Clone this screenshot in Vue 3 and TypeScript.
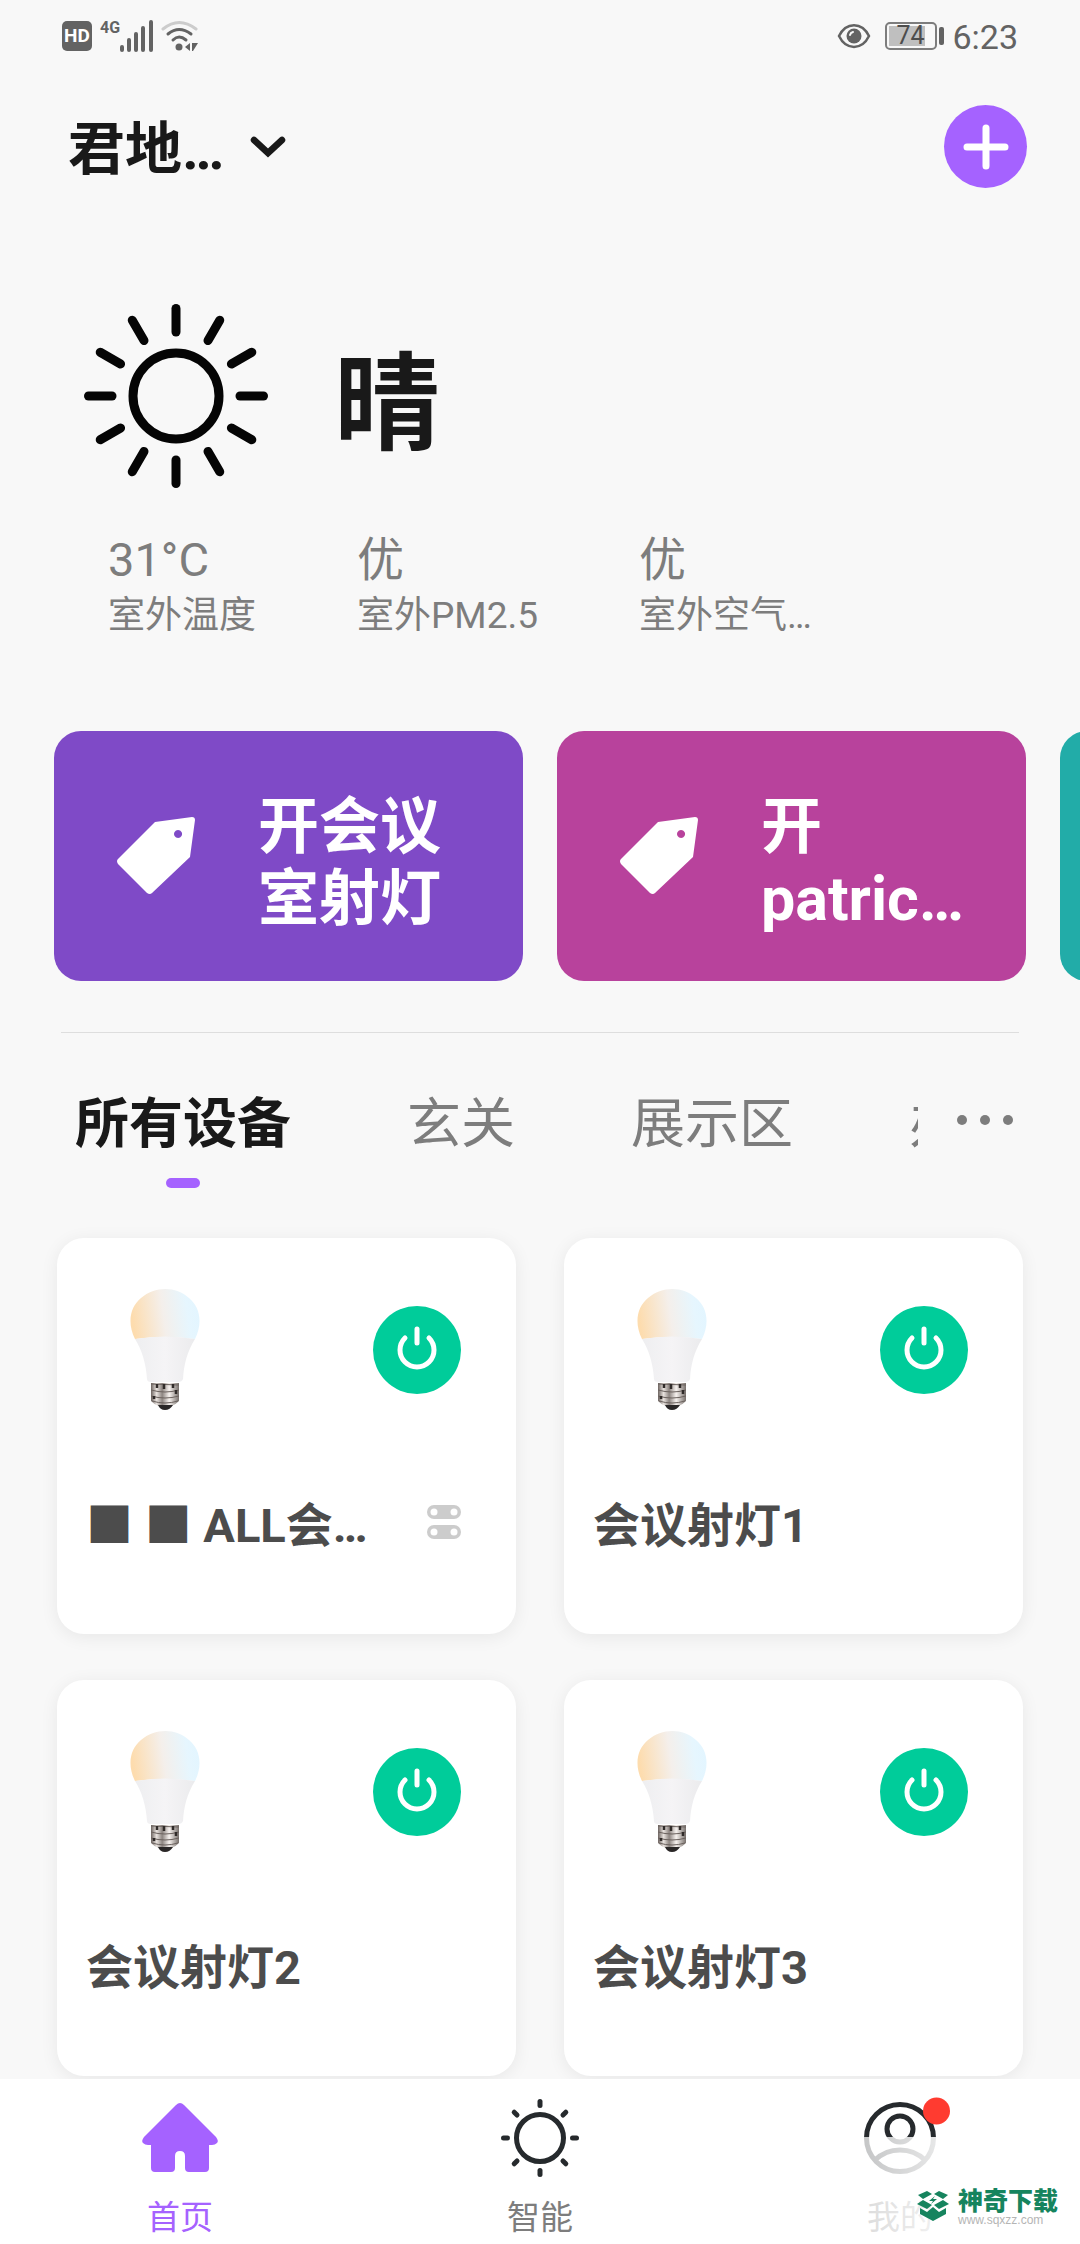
<script setup lang="ts">
import { ref } from 'vue'

interface Stat { value: string; label: string }
interface Scene { name: string; tone: string }
interface Device { name: string; group: boolean }

const stats: Stat[] = [
  { value: '31°C', label: '室外温度' },
  { value: '优', label: '室外PM2.5' },
  { value: '优', label: '室外空气…' },
]

const scenes: Scene[] = [
  { name: '开会议室射灯', tone: 'violet' },
  { name: '开 patric…', tone: 'magenta' },
  { name: '', tone: 'teal' },
]

const rooms: string[] = ['所有设备', '玄关', '展示区', '办公室']
const activeRoom = ref(0)

const devices: Device[] = [
  { name: '■ ■ ALL会…', group: true },
  { name: '会议射灯1', group: false },
  { name: '会议射灯2', group: false },
  { name: '会议射灯3', group: false },
]

const rays = Array.from({ length: 12 }, (_, i) => i * 30)
const smallRays = Array.from({ length: 8 }, (_, i) => i * 45)
</script>

<template>
  <div class="page">
    <div class="status">
      <div class="status-side">
        <span class="hd">HD</span>
        <span class="net">4G</span>
        <svg class="signal" width="34" height="32" viewBox="0 0 34 32" aria-hidden="true">
          <path d="M2 27v3M9 20v10M16 14v16M23 8v22M31 2v28" fill="none" stroke="#636363" stroke-width="4" stroke-linecap="round" />
        </svg>
        <svg width="38" height="32" viewBox="0 0 38 32" fill="none" aria-hidden="true">
          <path d="M2 9Q18 -4 35 9" stroke="#cccccc" stroke-width="3" stroke-linecap="round" />
          <path d="M7 14Q18 5 30 14" stroke="#636363" stroke-width="3" stroke-linecap="round" />
          <path d="M12 20Q18 14 25 20" stroke="#636363" stroke-width="3" stroke-linecap="round" />
          <circle cx="18" cy="27" r="3.5" fill="#636363" />
          <path d="M24 27l5-4v8zM31 23h6l-5 8h-1z" fill="#636363" />
        </svg>
      </div>
      <div class="status-side">
        <svg class="eye" width="34" height="26" viewBox="0 0 34 26" aria-hidden="true">
          <path d="M2 13C9-1.500 25-1.500 32 13C25 27.500 9 27.500 2 13z" fill="none" stroke="#636363" stroke-width="2.500" />
          <circle cx="17" cy="13" r="7.500" fill="#636363" />
          <path d="M13 12a4 4 0 0 1 3-3" fill="none" stroke="#f8f8f8" stroke-width="2" stroke-linecap="round" />
        </svg>
        <span class="battery"><span class="level">74</span></span>
        <span class="cap"></span>
        <span class="time">6:23</span>
      </div>
    </div>

    <header class="header">
      <button class="home" type="button">
        <span>君地…</span>
        <svg width="36" height="22" viewBox="0 0 36 22" aria-hidden="true">
          <path d="M4 4L18 17L32 4" fill="none" stroke="#191919" stroke-width="6.500" stroke-linecap="round" />
        </svg>
      </button>
      <button class="add" type="button" aria-label="添加">
        <svg width="46" height="46" viewBox="0 0 46 46" aria-hidden="true">
          <path d="M23 4v38M4 23h38" stroke="#ffffff" stroke-width="7" stroke-linecap="round" />
        </svg>
      </button>
    </header>

    <main>
      <section class="weather">
        <div class="sky">
          <svg width="184" height="184" viewBox="-92 -92 184 184" fill="none" stroke="#050505" stroke-width="9" aria-hidden="true">
            <circle r="43" />
            <path v-for="a in rays" :key="a" d="M0 -64V-87.500" stroke-linecap="round" :transform="`rotate(${a})`" />
          </svg>
          <h1>晴</h1>
        </div>
        <dl class="stats">
          <div v-for="(s, i) in stats" :key="i" class="stat">
            <dd>{{ s.value }}</dd>
            <dt>{{ s.label }}</dt>
          </div>
        </dl>
      </section>

      <section class="scenes">
        <button v-for="s in scenes" :key="s.tone" type="button" class="scene" :class="s.tone" :aria-label="s.name || '场景'">
          <svg v-if="s.name" width="78" height="78" viewBox="0 0 78 78" aria-hidden="true">
            <path fill-rule="evenodd" d="M38 5L75 0Q78 0 78 3L73 40L35 76Q33 78 30 76L1 47Q-1 44 1 42zM61 13a4 4 0 1 0 .1 0z" fill="#ffffff" />
          </svg>
          <span v-if="s.name" class="scene-name">{{ s.name }}</span>
        </button>
      </section>

      <div class="rooms">
        <nav class="tabs">
          <button
            v-for="(r, i) in rooms"
            :key="r"
            type="button"
            class="tab"
            :class="{ active: i === activeRoom }"
            @click="activeRoom = i"
          >{{ r }}</button>
        </nav>
        <button class="more" type="button" aria-label="更多"><i></i><i></i><i></i></button>
      </div>

      <section class="devices">
        <article v-for="d in devices" :key="d.name" class="device">
          <div class="device-top">
            <svg width="70" height="122" viewBox="0 0 70 122" aria-hidden="true">
              <defs>
                <linearGradient id="glass" x1="0" x2="1" y1="0.300" y2="0.200">
                  <stop offset="0" stop-color="#fddcae" />
                  <stop offset="0.450" stop-color="#f4efeb" />
                  <stop offset="0.800" stop-color="#e6f6fe" />
                  <stop offset="1" stop-color="#e2f5ff" />
                </linearGradient>
                <linearGradient id="shell" x1="0" x2="1" y1="0" y2="0">
                  <stop offset="0" stop-color="#eeeef0" />
                  <stop offset="0.500" stop-color="#f5f4f6" />
                  <stop offset="1" stop-color="#ebebed" />
                </linearGradient>
                <linearGradient id="metal" x1="0" x2="1" y1="0" y2="0">
                  <stop offset="0" stop-color="#6d6460" />
                  <stop offset="0.200" stop-color="#e9e3df" />
                  <stop offset="0.400" stop-color="#8d8581" />
                  <stop offset="0.650" stop-color="#f7f2ef" />
                  <stop offset="1" stop-color="#77706c" />
                </linearGradient>
              </defs>
              <path d="M5 50C-3 34 0 18 11 9C25-3 46-3 59 9C70 18 73 34 65 50Q35 46 5 50z" fill="url(#glass)" />
              <path d="M5 50Q35 45 65 50C57 63 54 75 53 90Q52 93 48 93H21Q17 93 17 90C16 75 12 61 5 50z" fill="url(#shell)" />
              <path d="M21 94H49V112Q43 118 35 118T21 112z" fill="url(#metal)" />
              <path d="M21 95L49 96M21 101Q35 105 49 101M21 107Q35 111 49 107M22 112Q35 116 48 112" fill="none" stroke="#6b625e" stroke-width="1" />
              <path d="M27 95v4M34 95v5M43 95v4M46 101v4M24 107v3" stroke="#302b29" stroke-width="2.500" />
              <path d="M28 116H43Q40 121 35 121T28 116z" fill="#2a2727" />
            </svg>
            <button class="power" type="button" aria-label="开关">
              <svg width="44" height="48" viewBox="0 0 44 48" fill="none" stroke="#ffffff" stroke-width="5" stroke-linecap="round" aria-hidden="true">
                <path d="M22 3V17" />
                <path d="M10 12A17 17 0 1 0 34 12" />
              </svg>
            </button>
          </div>
          <div class="device-info">
            <h2>{{ d.name }}</h2>
            <svg v-if="d.group" width="34" height="34" viewBox="0 0 34 34" aria-hidden="true">
              <rect width="34" height="14" rx="7" fill="#cccccc" />
              <rect y="20" width="34" height="14" rx="7" fill="#cccccc" />
              <g fill="#ffffff">
                <circle cx="7" cy="7" r="3.500" /><circle cx="27" cy="7" r="3.500" />
                <circle cx="7" cy="27" r="3.500" /><circle cx="27" cy="27" r="3.500" />
              </g>
            </svg>
          </div>
        </article>
      </section>
    </main>

    <nav class="bottom">
      <a href="#home" class="item current">
        <svg width="80" height="80" viewBox="0 0 80 80" aria-hidden="true">
          <path d="M36 7Q40 3 44 7L76 39Q79 43 77 45Q75 47 72 47H69V70Q69 74 65 74H49Q45 74 45 70V58Q45 53 40 53T35 58V70Q35 74 31 74H15Q11 74 11 70V47H8Q5 47 3 45Q1 43 4 39z" fill="#a562ff" />
        </svg>
        <span>首页</span>
      </a>
      <a href="#smart" class="item">
        <svg width="80" height="80" viewBox="-40 -40 80 80" fill="none" stroke="#262a2d" aria-hidden="true">
          <circle r="23.500" stroke-width="5" />
          <path v-for="a in smallRays" :key="a" d="M0 -32.500V-36.500" stroke-width="5" stroke-linecap="round" :transform="`rotate(${a})`" />
        </svg>
        <span>智能</span>
      </a>
      <a href="#mine" class="item">
        <svg width="80" height="80" viewBox="-40 -40 80 80" fill="none" stroke="#262a2d" stroke-width="5" aria-hidden="true">
          <circle r="33.500" />
          <circle cy="-9" r="13" />
          <path d="M-25 22A36 36 0 0 1 25 22" />
          <circle cx="36.500" cy="-27" r="13.500" fill="#ff3b30" stroke="none" />
        </svg>
        <span>我的</span>
      </a>
      <div class="mark">
        <svg width="32" height="32" viewBox="0 0 32 32" fill="#16845e" aria-hidden="true">
          <path d="M1 5L10 1L15 4L6 9zM22 1L31 5L26 9L17 4z" />
          <path d="M6 10L15 15L10 19L0 14zM26 10L32 14L22 19L17 15z" />
          <path d="M3 18L10 22L16 17L22 22L29 18V24L16 31L3 24z" />
          <path d="M18 6L12 11H16L14 14L20 9H16z" />
        </svg>
        <div class="mark-text">
          <strong>神奇下载</strong>
          <small>www.sqxzz.com</small>
        </div>
      </div>
    </nav>
  </div>
</template>

<style>
body {
  margin: 0;
  background: #f8f8f8;
}
</style>

<style scoped>
.page {
  display: flex;
  flex-direction: column;
  min-height: 100vh;
  overflow: hidden;
  background: #f8f8f8;
  color: #191919;
  font-family: Roboto, "Noto Sans CJK SC", sans-serif;
}
svg {
  display: block;
  flex: none;
}
button {
  margin: 0;
  padding: 0;
  border: 0;
  background: none;
  color: inherit;
  font: inherit;
  text-align: left;
}
main {
  flex: 1;
}

.status {
  display: flex;
  justify-content: space-between;
  height: 72px;
  padding: 0 62px;
  color: #636363;
}
.status-side {
  display: flex;
  align-items: center;
}
.hd {
  width: 30px;
  border-radius: 5px;
  background: #636363;
  color: #ffffff;
  font-size: 19px;
  font-weight: 700;
  line-height: 30px;
  text-align: center;
}
.net {
  align-self: flex-start;
  margin: 18px 0 0 8px;
  font-size: 16px;
  font-weight: 700;
  line-height: 20px;
}
.signal {
  margin-right: 7px;
}
.eye {
  margin-right: 14px;
}
.battery {
  box-sizing: border-box;
  width: 52px;
  height: 28px;
  padding: 2px;
  border: 2px solid #7d7d7d;
  border-radius: 5px;
}
.level {
  display: block;
  width: 36px;
  padding-left: 7px;
  box-sizing: border-box;
  background: #bfbfbf;
  color: #4d4d4d;
  font-size: 25px;
  line-height: 20px;
  height: 20px;
}
.cap {
  width: 5px;
  height: 18px;
  margin: 0 8px 0 2px;
  border-radius: 2px;
  background: #636363;
}
.time {
  font-size: 34px;
  line-height: 40px;
  padding-top: 2px;
}

.header {
  display: flex;
  align-items: center;
  justify-content: space-between;
  height: 149px;
  padding: 0 53px 0 68px;
}
.home {
  display: flex;
  align-items: center;
  gap: 26px;
  font-size: 57px;
  font-weight: 700;
  line-height: 72px;
}
.home span {
  padding-top: 6px;
}
.add {
  display: grid;
  place-items: center;
  width: 83px;
  height: 83px;
  border-radius: 50%;
  background: #a562ff;
}

.weather {
  padding: 83px 54px 88px 84px;
}
.sky {
  display: flex;
  align-items: center;
  gap: 66px;
}
.sky h1 {
  margin: 0;
  padding-top: 18px;
  font-size: 106px;
  font-weight: 700;
  line-height: 120px;
}
.stats {
  display: flex;
  gap: 101px;
  margin: 44px 0 0 24px;
  color: #7d7d7d;
}
.stat {
  display: flex;
  flex-direction: column;
}
.stat dd {
  margin: 0;
  font-size: 47px;
  line-height: 56px;
}
.stat dt {
  font-size: 37px;
  line-height: 55px;
}

.scenes {
  display: grid;
  grid-auto-flow: column;
  grid-auto-columns: calc(50% - 44px);
  gap: 34px;
  margin: 0 0 0 54px;
  overflow: hidden;
}
.scene {
  display: flex;
  align-items: center;
  gap: 63px;
  box-sizing: border-box;
  height: 250px;
  padding: 0 58px 0 63px;
  border-radius: 27px;
  color: #ffffff;
  font-size: 61px;
  font-weight: 700;
  line-height: 72px;
}
.scene-name {
  min-width: 0;
  padding-top: 14px;
}
.violet {
  background: #7f4ac7;
}
.magenta {
  background: #b8429c;
}
.teal {
  background: #22aca8;
}

.rooms {
  display: flex;
  margin: 51px 61px 0;
  border-top: 1px solid #dedede;
}
.tabs {
  display: flex;
  flex: 1;
  gap: 116px;
  min-width: 0;
  padding-left: 14px;
  overflow: hidden;
}
.tab {
  position: relative;
  flex: none;
  height: 205px;
  padding-bottom: 22px;
  color: #7d7d7d;
  font-size: 54px;
  line-height: 72px;
  white-space: nowrap;
}
.tab.active {
  color: #191919;
  font-weight: 700;
}
.tab.active::after {
  content: "";
  position: absolute;
  top: 145px;
  left: 50%;
  width: 34px;
  height: 10px;
  margin-left: -17px;
  border-radius: 5px;
  background: #a562ff;
}
.more {
  display: flex;
  gap: 13px;
  justify-content: flex-end;
  width: 101px;
  box-sizing: border-box;
  padding: 82px 6px 0 0;
  align-items: flex-start;
}
.more i {
  width: 10px;
  height: 10px;
  border-radius: 50%;
  background: #7d7d7d;
}

.devices {
  display: grid;
  grid-template-columns: 1fr 1fr;
  gap: 46px 48px;
  padding: 0 57px 3px;
}
.device {
  box-sizing: border-box;
  min-width: 0;
  height: 396px;
  padding: 51px 55px 0 29px;
  border-radius: 27px;
  background: #ffffff;
  box-shadow: 0 3px 18px rgba(0, 0, 0, 0.07);
}
.device-top {
  display: flex;
  align-items: center;
  justify-content: space-between;
  padding-left: 44px;
}
.power {
  display: grid;
  place-items: center;
  width: 88px;
  height: 88px;
  border-radius: 50%;
  background: #00cc9a;
}
.device-info {
  display: flex;
  align-items: center;
  justify-content: space-between;
  margin-top: 77px;
}
.device-info h2 {
  margin: 0;
  padding-top: 8px;
  color: #4c4c4c;
  font-size: 47px;
  font-weight: 700;
  line-height: 60px;
  white-space: nowrap;
}

.bottom {
  position: relative;
  display: grid;
  grid-template-columns: repeat(3, 1fr);
  height: 165px;
  background: #ffffff;
}
.item {
  display: flex;
  flex-direction: column;
  align-items: center;
  padding-top: 19px;
  color: #7d7d7d;
  font-size: 33px;
  line-height: 40px;
  text-decoration: none;
}
.item svg {
  overflow: visible;
}
.item span {
  margin-top: 20px;
}
.current {
  color: #a562ff;
}
.mark {
  position: absolute;
  right: 0;
  bottom: 0;
  display: flex;
  gap: 9px;
  box-sizing: border-box;
  width: 230px;
  height: 107px;
  padding: 53px 0 0 67px;
  background: linear-gradient(90deg, rgba(255, 255, 255, 0.7), rgba(255, 255, 255, 0.95) 50%);
}
.mark-text {
  display: flex;
  flex-direction: column;
}
.mark strong {
  color: #16845e;
  font-size: 25px;
  font-weight: 900;
  line-height: 24px;
}
.mark small {
  color: #b5b5b5;
  font-family: "Liberation Sans", sans-serif;
  font-size: 12px;
  line-height: 12px;
}
</style>
